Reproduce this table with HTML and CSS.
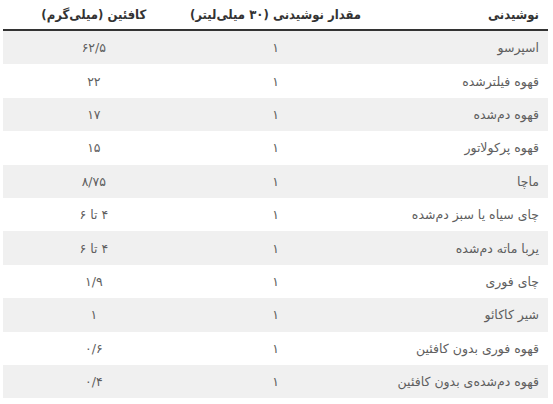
FILE: index.html
```html
<!DOCTYPE html>
<html lang="fa" dir="rtl">
<head>
<meta charset="utf-8">
<link rel="stylesheet" href="styles.css">
</head>
<body>
<div class="wrap">
<table class="caffeine">
<thead>
<tr><th class="c1">نوشیدنی</th><th>مقدار نوشیدنی (۳۰ میلی‌لیتر)</th><th>کافئین (میلی‌گرم)</th></tr>
</thead>
<tbody>
<tr><td class="c1">اسپرسو</td><td>۱</td><td>۶۲/۵</td></tr>
<tr><td class="c1">قهوه فیلترشده</td><td>۱</td><td>۲۲</td></tr>
<tr><td class="c1">قهوه دم‌شده</td><td>۱</td><td>۱۷</td></tr>
<tr><td class="c1">قهوه پرکولاتور</td><td>۱</td><td>۱۵</td></tr>
<tr><td class="c1">ماچا</td><td>۱</td><td>۸/۷۵</td></tr>
<tr><td class="c1">چای سیاه یا سبز دم‌شده</td><td>۱</td><td>۴ تا ۶</td></tr>
<tr><td class="c1">یربا ماته دم‌شده</td><td>۱</td><td>۴ تا ۶</td></tr>
<tr><td class="c1">چای فوری</td><td>۱</td><td>۱/۹</td></tr>
<tr><td class="c1">شیر کاکائو</td><td>۱</td><td>۱</td></tr>
<tr><td class="c1">قهوه فوری بدون کافئین</td><td>۱</td><td>۰/۶</td></tr>
<tr><td class="c1">قهوه دم‌شده‌ی بدون کافئین</td><td>۱</td><td>۰/۴</td></tr>
</tbody>
</table>
</div>
</body>
</html>
```

FILE: styles.css
```css
html, body {
  margin: 0;
  padding: 0;
  background: #ffffff;
}
.wrap {
  padding: 0 5px 0 3px;
}
.caffeine {
  width: 100%;
  border-collapse: collapse;
  table-layout: fixed;
  font-family: "DejaVu Sans", "Noto Sans", sans-serif;
  direction: rtl;
}
.caffeine th {
  height: 29px;
  padding: 0;
  font-family: "DejaVu Sans Condensed", "DejaVu Sans", sans-serif;
  font-size: 13px;
  font-weight: bold;
  color: #333333;
  text-align: center;
  border-bottom: 2px solid #333333;
  vertical-align: middle;
}
.caffeine td {
  height: 33.4px;
  padding: 0;
  font-size: 12.5px;
  color: #5e5e5e;
  text-align: center;
  vertical-align: middle;
}
.caffeine th.c1,
.caffeine td.c1 {
  text-align: right;
  padding-right: 9px;
}
.caffeine tbody tr:nth-child(odd) td {
  background: #f0f0f0;
}
```
